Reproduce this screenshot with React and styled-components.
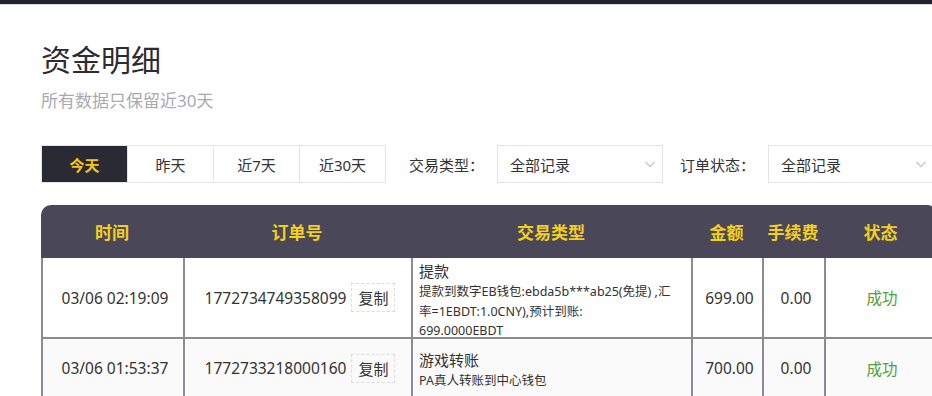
import React, { useState } from "react";
import styled, { createGlobalStyle } from "styled-components";

const GlobalStyle = createGlobalStyle`
  body {
    margin: 0;
    background: #fff;
    overflow: hidden;
    font-family: "Noto Sans", "Noto Sans CJK SC", sans-serif;
    color: #333;
  }
`;

const TopBar = styled.div`
  height: 4px;
  background: #22222c;
  border-bottom: 1px solid #d6d6de;
`;

const Page = styled.div`
  padding: 33px 0 0 41px;
  width: 900px;
`;

const Title = styled.h1`
  margin: 0;
  font-size: 30px;
  font-weight: 400;
  line-height: 44px;
  color: #2b2b33;
`;

const Subtitle = styled.div`
  margin-top: 8px;
  font-size: 17px;
  line-height: 22px;
  color: #a9a9b2;
`;

const Filters = styled.div`
  display: flex;
  align-items: center;
  margin-top: 33px;
  height: 38px;
`;

const Tabs = styled.div`
  display: flex;
  border: 1px solid #e3e3ea;
`;

const Tab = styled.div`
  width: 85px;
  height: 36px;
  display: flex;
  align-items: center;
  justify-content: center;
  font-size: 15px;
  border-left: ${(p) => (p.first ? "none" : "1px solid #e3e3ea")};
  background: ${(p) => (p.active ? "#2a2a34" : "#fff")};
  color: ${(p) => (p.active ? "#f5c518" : "#333")};
  font-weight: ${(p) => (p.active ? 700 : 400)};
  cursor: pointer;
`;

const Label = styled.span`
  font-size: 15px;
  color: #333;
  margin: 0 13px 0 ${(p) => p.gap}px;
`;

const Select = styled.div`
  box-sizing: border-box;
  width: 166px;
  height: 38px;
  border: 1px solid #e3e3ea;
  display: flex;
  align-items: center;
  justify-content: space-between;
  padding: 0 5px 0 12px;
  font-size: 15px;
  color: #333;
`;

const Table = styled.div`
  margin-top: 22px;
  width: 896px;
  border-radius: 10px 10px 0 0;
  overflow: hidden;
  display: grid;
  grid-template-columns: 142px 228px 280px 71px 62px 113px;
`;

const Head = styled.div`
  height: 53px;
  background: #4a4858;
  color: #f5cf1a;
  font-weight: 700;
  font-size: 17px;
  display: flex;
  align-items: center;
  justify-content: center;
`;

const Cell = styled.div`
  display: flex;
  align-items: center;
  justify-content: ${(p) => (p.left ? "flex-start" : "center")};
  height: ${(p) => p.h}px;
  background: ${(p) => (p.alt ? "#fafafa" : "#fff")};
  border-left: 2px solid #8c8b94;
  border-bottom: 2px solid #8c8b94;
  box-sizing: border-box;
  font-size: 15.5px;
  color: #333;
  padding: ${(p) => (p.left ? "0 6px" : "0 0 0 4px")};
`;

const TypeBox = styled.div`
  display: flex;
  flex-direction: column;
  align-self: ${(p) => (p.top ? "flex-start" : "center")};
  padding-top: ${(p) => (p.top ? "2px" : "4px")};
`;

const TypeName = styled.div`
  font-size: 15px;
  line-height: 22px;
`;

const TypeDetail = styled.div`
  font-size: 12.5px;
  line-height: 19.5px;
  white-space: nowrap;
  color: #333;
`;

const CopyBtn = styled.span`
  margin-left: 5px;
  border: 1px dashed #dcdce2;
  padding: 3px 6px;
  font-size: 15px;
  color: #333;
`;

const Success = styled.span`
  color: #4ea03a;
  font-size: 15.5px;
  margin-right: 3px;
`;

const Chevron = () => (
  <svg width="14" height="14" viewBox="0 0 14 14">
    <path d="M2.5 5 L7 9.5 L11.5 5" fill="none" stroke="#c8c8ce" strokeWidth="1.4" />
  </svg>
);

const rows = [
  {
    time: "03/06 02:19:09",
    order: "1772734749358099",
    type: "提款",
    detail: [
      "提款到数字EB钱包:ebda5b***ab25(免提) ,汇",
      "率=1EBDT:1.0CNY),预计到账:",
      "699.0000EBDT",
    ],
    amount: "699.00",
    fee: "0.00",
    h: 81,
  },
  {
    time: "03/06 01:53:37",
    order: "1772733218000160",
    type: "游戏转账",
    detail: ["PA真人转账到中心钱包"],
    amount: "700.00",
    fee: "0.00",
    h: 60,
  },
];

export default function App() {
  const [tab, setTab] = useState(0);
  const tabs = ["今天", "昨天", "近7天", "近30天"];
  return (
    <>
      <GlobalStyle />
      <TopBar />
      <Page>
        <Title>资金明细</Title>
        <Subtitle>所有数据只保留近30天</Subtitle>
        <Filters>
          <Tabs>
            {tabs.map((t, i) => (
              <Tab key={t} first={i === 0} active={tab === i} onClick={() => setTab(i)}>
                {t}
              </Tab>
            ))}
          </Tabs>
          <Label gap={23}>交易类型：</Label>
          <Select>
            全部记录
            <Chevron />
          </Select>
          <Label gap={17}>订单状态：</Label>
          <Select>
            全部记录
            <Chevron />
          </Select>
        </Filters>
        <Table>
          {["时间", "订单号", "交易类型", "金额", "手续费", "状态"].map((h) => (
            <Head key={h}>{h}</Head>
          ))}
          {rows.map((r, i) => (
            <React.Fragment key={r.order}>
              <Cell h={r.h} alt={i % 2 === 1}>{r.time}</Cell>
              <Cell h={r.h} alt={i % 2 === 1}>
                {r.order}
                <CopyBtn>复制</CopyBtn>
              </Cell>
              <Cell h={r.h} alt={i % 2 === 1} left>
                <TypeBox top={i === 0}>
                  <TypeName>{r.type}</TypeName>
                  {r.detail.map((d) => (
                    <TypeDetail key={d}>{d}</TypeDetail>
                  ))}
                </TypeBox>
              </Cell>
              <Cell h={r.h} alt={i % 2 === 1}>{r.amount}</Cell>
              <Cell h={r.h} alt={i % 2 === 1}>{r.fee}</Cell>
              <Cell h={r.h} alt={i % 2 === 1}>
                <Success>成功</Success>
              </Cell>
            </React.Fragment>
          ))}
        </Table>
      </Page>
    </>
  );
}
